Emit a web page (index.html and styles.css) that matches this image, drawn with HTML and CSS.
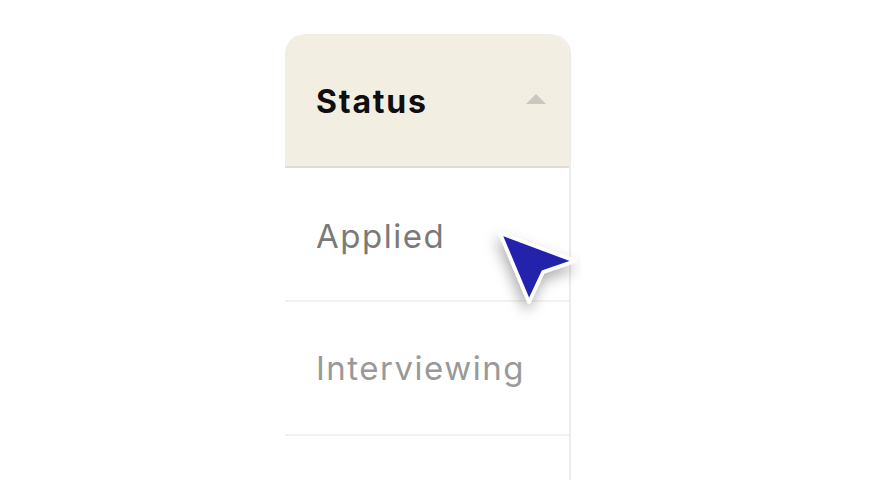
FILE: index.html
```html
<!DOCTYPE html>
<html>
<head>
<meta charset="utf-8">
<link rel="stylesheet" href="styles.css">
</head>
<body>
<div class="stage">
  <div class="table">
    <div class="head">
      <span class="head-label">Status</span>
      <span class="caret"></span>
    </div>
    <div class="row"><span class="cell applied">Applied</span></div>
    <div class="row"><span class="cell interviewing">Interviewing</span></div>
    <div class="row last"></div>
  </div>
  <svg class="cursor" width="100" height="100" viewBox="0 0 100 100">
    <defs>
      <filter id="sh" x="-50%" y="-50%" width="200%" height="200%">
        <feDropShadow dx="-2" dy="7" stdDeviation="7" flood-color="#000" flood-opacity="0.32"/>
      </filter>
    </defs>
    <path d="M19 13 L94 41 L62 52 L48 82 Z" fill="#2424ad" stroke="#fff" stroke-width="3.5" stroke-linejoin="round" filter="url(#sh)"/>
  </svg>
</div>
</body>
</html>
```
FILE: styles.css
```css
html, body {
  margin: 0;
  padding: 0;
  background: #ffffff;
}
body {
  font-family: "Inter", "Open Sans", sans-serif;
  overflow: hidden;
  height: 480px;
}
.stage {
  position: relative;
  padding: 34px 0 0 285px;
}
.table {
  width: 286px;
  border-right: 2px solid #ececec;
  box-sizing: border-box;
  border-top-right-radius: 20px;
}
.head {
  height: 132px;
  background: #f3eee2;
  border-radius: 20px 20px 0 0;
  border-bottom: 2px solid #dfdcd7;
  display: flex;
  align-items: center;
  justify-content: space-between;
  padding: 0 23px 0 31px;
}
.head-label {
  font-size: 32px;
  font-weight: 700;
  color: #0f0f0f;
  letter-spacing: 1.8px;
  margin-top: 2px;
}
.caret {
  width: 0;
  height: 0;
  border-left: 10px solid transparent;
  border-right: 10px solid transparent;
  border-bottom: 10px solid #cbc6be;
  margin-bottom: 2px;
}
.row {
  height: 132px;
  border-bottom: 2px solid #f1f1f1;
  display: flex;
  align-items: center;
  padding-left: 31px;
}
.row.last {
  height: 44px;
  border-bottom: none;
}
.cell {
  font-size: 33px;
  font-weight: 400;
  letter-spacing: 1.5px;
}
.applied {
  color: #7a7a7a;
  margin-top: 4px;
}
.interviewing {
  color: #999999;
}
.cursor {
  position: absolute;
  left: 481px;
  top: 220px;
}
```
